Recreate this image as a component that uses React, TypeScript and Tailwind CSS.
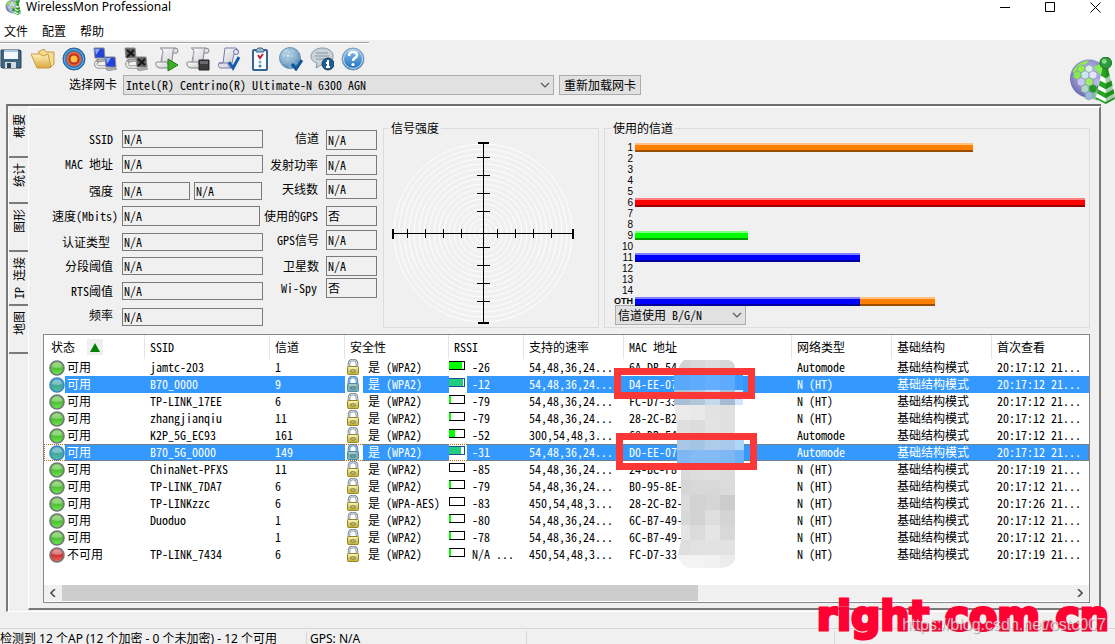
import type { ReactNode } from 'react';

const channels = [
  { name: '1', bars: [{ color: '#ff8000', value: 75 }] },
  { name: '2', bars: [] },
  { name: '3', bars: [] },
  { name: '4', bars: [] },
  { name: '5', bars: [] },
  { name: '6', bars: [{ color: '#ff0000', value: 100 }] },
  { name: '7', bars: [] },
  { name: '8', bars: [] },
  { name: '9', bars: [{ color: '#00ff00', value: 25 }] },
  { name: '10', bars: [] },
  { name: '11', bars: [{ color: '#0000ff', value: 50 }] },
  { name: '12', bars: [] },
  { name: '13', bars: [] },
  { name: '14', bars: [] },
  { name: 'OTH', bars: [{ color: '#0000ff', value: 50 }, { color: '#ff8000', value: 16.6 }] },
];

const networks = [
  { ssid: 'jamtc-203', channel: '1', security: '(WPA2)', rssi: '-26', level: 13, rates: '54,48,36,24...', mac: '6A-DB-54', type: 'Automode', seen: '20:17:12 21...' },
  { ssid: 'B70_0000', channel: '9', security: '(WPA2)', rssi: '-12', level: 14, rates: '54,48,36,24...', mac: 'D4-EE-07', type: 'N (HT)', seen: '20:17:12 21...', selected: true },
  { ssid: 'TP-LINK_17EE', channel: '6', security: '(WPA2)', rssi: '-79', level: 2, rates: '54,48,36,24...', mac: 'FC-D7-33', type: 'N (HT)', seen: '20:17:12 21...' },
  { ssid: 'zhangjianqiu', channel: '11', security: '(WPA2)', rssi: '-79', level: 2, rates: '54,48,36,24...', mac: '28-2C-B2', type: 'N (HT)', seen: '20:17:12 21...' },
  { ssid: 'K2P_5G_EC93', channel: '161', security: '(WPA2)', rssi: '-52', level: 6, rates: '300,54,48,3...', mac: '68-DB-54', type: 'Automode', seen: '20:17:12 21...' },
  { ssid: 'B70_5G_0000', channel: '149', security: '(WPA2)', rssi: '-31', level: 12, rates: '54,48,36,24...', mac: 'D0-EE-07', type: 'Automode', seen: '20:17:12 21...', selected: true, focused: true },
  { ssid: 'ChinaNet-PFXS', channel: '11', security: '(WPA2)', rssi: '-85', level: 0, rates: '54,48,36,24...', mac: '24-BC-F8', type: 'N (HT)', seen: '20:17:19 21...' },
  { ssid: 'TP-LINK_7DA7', channel: '6', security: '(WPA2)', rssi: '-79', level: 2, rates: '54,48,36,24...', mac: 'B0-95-8E-', type: 'N (HT)', seen: '20:17:12 21...' },
  { ssid: 'TP-LINKzzc', channel: '6', security: '(WPA-AES)', rssi: '-83', level: 0, rates: '450,54,48,3...', mac: '28-2C-B2-', type: 'N (HT)', seen: '20:17:26 21...' },
  { ssid: 'Duoduo', channel: '1', security: '(WPA2)', rssi: '-80', level: 2, rates: '54,48,36,24...', mac: '6C-B7-49-', type: 'N (HT)', seen: '20:17:12 21...' },
  { ssid: '', channel: '1', security: '(WPA2)', rssi: '-78', level: 2, rates: '54,48,36,24...', mac: '6C-B7-49-', type: 'N (HT)', seen: '20:17:12 21...' },
  { ssid: 'TP-LINK_7434', channel: '6', security: '(WPA2)', rssi: 'N/A ...', level: 2, rates: '450,54,48,3...', mac: 'FC-D7-33', type: 'N (HT)', seen: '20:17:19 21...', offline: true },
];

const mosaicRows = [
  ['#d3d3d3', '#d8d8d8', '#dddddd', '#d6d6d6'],
  ['#5aa8fa', '#5eabfb', '#64aeff', '#5eabfd'],
  ['#a9bfd6', '#b2c6dc', '#c4d8ee', '#a6bcd4'],
  ['#ebebeb', '#e9e9e9', '#e2e2e2', '#e0e0e0'],
  ['#dfdfdf', '#dcdcdc', '#e3e3e3', '#e0e0e0'],
  ['#a9c8e8', '#a4c4e5', '#aecbe9', '#a9c9ea'],
  ['#80b7f2', '#85bbf5', '#84baf4', '#7fb7f4'],
  ['#dadada', '#dddddd', '#dedede', '#dcdcdc'],
  ['#d6d6d6', '#d8d8d8', '#d8d8d8', '#dbdbdb'],
  ['#dbdbdb', '#d2d2d2', '#d5d5d5', '#cccccc'],
  ['#d8d8d8', '#d3d3d3', '#dedede', '#d4d4d4'],
  ['#e4e4e4', '#dbdbdb', '#e5e5e5', '#d8d8d8'],
  ['#dedede', '#e1e1e1', '#e2e2e2', '#e2e2e2'],
  ['#f3f3f3', '#f3f3f3', '#f1f1f1', '#ececec'],
];

function Gradients() {
  return (
    <svg className="absolute h-0 w-0" aria-hidden="true">
      <defs>
        <linearGradient id="paper" x1="0" y1="0" x2="1" y2="1">
          <stop offset="0" stopColor="#ffffff" />
          <stop offset="1" stopColor="#c4c4cc" />
        </linearGradient>
        <linearGradient id="folder" x1="0" y1="0" x2="0" y2="1">
          <stop offset="0" stopColor="#fff0b8" />
          <stop offset="1" stopColor="#d9a83c" />
        </linearGradient>
        <radialGradient id="sky" cx="0.4" cy="0.3" r="0.7">
          <stop offset="0" stopColor="#d9eefb" />
          <stop offset="1" stopColor="#4d86b4" />
        </radialGradient>
        <radialGradient id="lilac" cx="0.5" cy="0.4" r="0.6">
          <stop offset="0" stopColor="#d5d4fa" />
          <stop offset="1" stopColor="#6a69b0" />
        </radialGradient>
        <linearGradient id="okOrb" x1="0" y1="0" x2="0" y2="1">
          <stop offset="0" stopColor="#8fd070" />
          <stop offset="0.5" stopColor="#4cbf30" />
          <stop offset="1" stopColor="#6fe850" />
        </linearGradient>
        <linearGradient id="badOrb" x1="0" y1="0" x2="0" y2="1">
          <stop offset="0" stopColor="#e89090" />
          <stop offset="0.5" stopColor="#cc3030" />
          <stop offset="1" stopColor="#ee6a60" />
        </linearGradient>
        <linearGradient id="selOrb" x1="0" y1="0" x2="0" y2="1">
          <stop offset="0" stopColor="#5aaed0" />
          <stop offset="0.5" stopColor="#42a69c" />
          <stop offset="1" stopColor="#4fc0a0" />
        </linearGradient>
        <linearGradient id="brass" x1="0" y1="0" x2="0" y2="1">
          <stop offset="0" stopColor="#f4efa0" />
          <stop offset="1" stopColor="#c2b030" />
        </linearGradient>
        <linearGradient id="helpBlue" x1="0" y1="0" x2="0" y2="1">
          <stop offset="0" stopColor="#8cc4f0" />
          <stop offset="1" stopColor="#1b6fbd" />
        </linearGradient>
      </defs>
    </svg>
  );
}

function Scroll() {
  return (
    <>
      <path d="M5 1h15q3 0 3 3l-1 2h-4l-2 14H5L8 4z" fill="url(#paper)" stroke="#85858c" />
      <path d="M18 6q-1-3 2-5" fill="none" stroke="#85858c" />
      <path d="M5 1q3 0 3 4L7 15" fill="none" stroke="#b5b5bc" />
      <path d="M12 15H2q-2 0-1 3 1 3 4 3h12q-4-1-5-6z" fill="url(#paper)" stroke="#85858c" />
    </>
  );
}

function Computers({ screen, crossed }: { screen: string; crossed?: boolean }) {
  return (
    <>
      <path d="M6 13q-6 4-1 7h9" fill="none" stroke="#999999" strokeWidth="3.5" />
      <path d="M6 13q-6 4-1 7h9" fill="none" stroke="#f4f4f4" strokeWidth="1.5" />
      <path d="M1 1h10l1 10H2z" fill={screen} stroke="#888888" />
      <path d="M3 13l9-1 2 2-10 1z" fill="#b5b5b5" stroke="#666666" strokeWidth="0.5" />
      <path d="M12 10h10l1 10H13z" fill={screen} stroke="#888888" />
      <path d="M13 22l9-2 2 2-9 2z" fill="#b5b5b5" stroke="#666666" strokeWidth="0.5" />
      {crossed ? (
        <path d="M3 3l7 6M10 3l-7 7M14 12l7 6M21 12l-7 7" stroke="#151515" strokeWidth="1.8" />
      ) : (
        <path d="M2 2h5l-4 6zM13 11h5l-4 6z" fill="#86aaff" />
      )}
    </>
  );
}

const tools: { label: string; icon: ReactNode }[] = [
  {
    label: '保存',
    icon: (
      <>
        <path d="M1 3h19l1 1v17H2l-1-1z" fill="#3f6480" stroke="#28455c" />
        <path d="M4 3h14v9H4z" fill="#f2f8fc" />
        <path d="M4 3h14v2H4z" fill="#a9c8e0" />
        <path d="M5 15h11v6H5z" fill="#d4dbe0" />
        <path d="M7 16h4v5H7z" fill="#28455c" />
      </>
    ),
  },
  {
    label: '打开',
    icon: (
      <>
        <path d="M7 5l6-3 2 3h8v12l-4 4z" fill="#f5dc92" stroke="#c79a44" />
        <path d="M0 7h9l3 2 5-2 3 13-2 1H6z" fill="url(#folder)" stroke="#c79a44" />
      </>
    ),
  },
  {
    label: '目标',
    icon: (
      <>
        <circle cx="12" cy="12" r="11" fill="#2478bd" stroke="#2d628f" />
        <circle cx="12" cy="12" r="9.5" fill="none" stroke="#6db4ec" />
        <circle cx="12" cy="12" r="7.5" fill="#e8643c" />
        <circle cx="12" cy="12" r="5.5" fill="#b8322a" />
        <circle cx="12" cy="12" r="3.5" fill="#ffc23c" />
      </>
    ),
  },
  { label: '连接', icon: <Computers screen="#2442d8" /> },
  { label: '断开', icon: <Computers screen="#606060" crossed /> },
  {
    label: '开始记录',
    icon: (
      <>
        <Scroll />
        <path d="M13 12l10 6-10 6z" fill="#3fae2a" stroke="#1f7a14" />
      </>
    ),
  },
  {
    label: '停止记录',
    icon: (
      <>
        <Scroll />
        <path d="M13 13h10v10H13z" fill="#3c3c3c" stroke="#222222" />
        <path d="M14 14h8v3h-8z" fill="#6c6c6c" />
      </>
    ),
  },
  {
    label: '脚本',
    icon: (
      <>
        <path d="M8 1h11q4 2 2 6h-4l-3 14H3q-3-2-1-5h4z" fill="url(#paper)" stroke="#7a7aa8" />
        <path d="M2 16h9q0 4 3 5" fill="none" stroke="#7a7aa8" />
        <circle cx="19" cy="5" r="2.5" fill="#e5e5f5" stroke="#7a7aa8" />
        <path d="M12 15l4 6 6-11" fill="none" stroke="#155fb0" strokeWidth="3" />
      </>
    ),
  },
  {
    label: '清单',
    icon: (
      <>
        <rect x="5" y="3" width="14" height="20" rx="1" fill="#f8fbff" stroke="#35658f" strokeWidth="2" />
        <path d="M8 3l2-2h4l2 2v2H8z" fill="#9db4c8" stroke="#35658f" />
        <path d="M10 8l2 3 3-4" fill="none" stroke="#c0202c" strokeWidth="2" />
        <circle cx="12" cy="15" r="1.5" fill="#8aa9c2" />
        <circle cx="12" cy="19" r="1.5" fill="#4d86b4" />
      </>
    ),
  },
  {
    label: '网络检查',
    icon: (
      <>
        <circle cx="11" cy="11" r="10.5" fill="url(#sky)" stroke="#6f93ad" />
        <path d="M1 11h20M11 1v20M3 5q8 4 16 0M3 17q8-4 16 0M11 1q-9 10 0 20M11 1q9 10 0 20" fill="none" stroke="#8fb4cd" strokeWidth="0.8" />
        <path d="M13 17l4 5 6-9" fill="none" stroke="#12579c" strokeWidth="3" />
      </>
    ),
  },
  {
    label: '信息',
    icon: (
      <>
        <path d="M12 1c6 0 11 3 11 8s-4 8-10 8l-7 4 1-5c-4-1-6-3-6-7s5-8 11-8z" fill="#c9d3db" stroke="#8797a3" />
        <path d="M6 6h12M5 9h14M6 12h10" stroke="#8a97a0" />
        <circle cx="18" cy="17" r="6" fill="#245c8c" stroke="#173f62" />
        <path d="M18 13v2M16 16h2v4M16 20h4" fill="none" stroke="#ffffff" strokeWidth="2" />
      </>
    ),
  },
  {
    label: '帮助',
    icon: (
      <>
        <circle cx="12" cy="12" r="11" fill="url(#helpBlue)" stroke="#8b98a4" />
        <circle cx="12" cy="12" r="9.5" fill="none" stroke="#c3e0f6" />
        <path d="M8 9q0-4 4-4t4 3q0 2-2 3t-2 3" fill="none" stroke="#ffffff" strokeWidth="2.6" />
        <circle cx="12" cy="17.5" r="1.6" fill="#ffffff" />
      </>
    ),
  },
];

const hexes = [
  [12, 13, '#8fee50'], [20, 13, '#d8f0e0'], [8, 19, '#86e850'], [16, 19, '#c8e8f0'], [24, 19, '#e4e4ff'],
  [28, 26, '#b4b4e8'], [20, 26, '#9cf060'], [12, 26, '#c8c8f4'], [16, 33, '#b0d8c8'], [24, 33, '#1f9a1c'],
  [32, 33, '#178a16'], [28, 40, '#86c8a0'], [20, 40, '#98b8d8'],
] as const;

function Logo({ className }: { className: string }) {
  return (
    <svg viewBox="0 0 46 48" className={className} aria-hidden="true">
      <circle cx="20" cy="22" r="19.5" fill="url(#lilac)" />
      <path d="M3 15Q8 5 20 3l-3 4-8 3-3 7z" fill="#8cf04a" />
      {hexes.map(([x, y, fill]) => (
        <path key={`${x}-${y}`} d={`M${x} ${y - 5}l4 2v5l-4 2-4-2v-5z`} fill={fill} stroke="#8a92b0" strokeWidth="0.7" />
      ))}
      <path d="M25 10l9-4 2 8-5 4z" fill="#86f04c" />
      <path d="M34 10h5l8 31-10 7-10-7z" fill="#fafffa" />
      <path d="M34 10h5l2 9-4 3-5-3zM31 24l6 3 6-3 1 5-7 4-7-4zM29 33l8 4 8-4 1 4-9 5-9-5zM27 41l10 5 9-5v2l-9 5-10-5z" fill="#26a422" />
      <path d="M37 10h2l8 33-10 5z" fill="#0c6a14" fillOpacity="0.35" />
      <circle cx="37" cy="6" r="6" fill="#2f9a3a" stroke="#1a6e26" />
      <circle cx="35.5" cy="4.5" r="2.5" fill="#86d88c" />
    </svg>
  );
}

function StatusOrb({ fill, ring }: { fill: string; ring: string }) {
  return (
    <svg viewBox="0 0 16 16" className="h-4 w-4 shrink-0" aria-hidden="true">
      <circle cx="8" cy="8" r="7" fill={fill} stroke={ring} strokeWidth="1.6" />
      <path d="M3 7q0-4 5-4t5 4q-5 2-10 0z" fill="#ffffff" fillOpacity="0.3" />
    </svg>
  );
}

function Lock({ selected }: { selected?: boolean }) {
  return (
    <svg viewBox="0 0 16 17" className="h-[17px] w-4" aria-hidden="true">
      <path d="M4 9V5q0-4 4-4t4 4v3" fill="none" stroke={selected ? '#4a84b8' : '#7d8a92'} strokeWidth="2.6" />
      <path d="M4 9V5q0-4 4-4t4 4v3" fill="none" stroke={selected ? '#9cc8ec' : '#d5dde2'} strokeWidth="1" />
      <rect x="2.5" y="7.5" width="11" height="8" rx="1" fill={selected ? '#7fb0a8' : 'url(#brass)'} stroke={selected ? '#4c8cb0' : '#94852a'} />
      <ellipse cx="8" cy="12" rx="2.6" ry="1.3" fill="none" stroke={selected ? '#4078a0' : '#7d8060'} />
      <path d="M4 9h7" stroke="#ffffff" strokeOpacity="0.6" />
    </svg>
  );
}

function SignalBar({ level, selected }: { level: number; selected?: boolean }) {
  return (
    <svg viewBox="0 0 16 9" className="mb-1 h-[9px] w-4" shapeRendering="crispEdges" aria-hidden="true">
      <rect width="16" height="9" fill={selected ? '#1a4f8c' : '#000000'} />
      <rect x="0" y="1" width="15" height="7" fill="#ffffff" />
      <rect x="0" y="1" width={level} height="7" fill={selected ? '#1fcc80' : '#00ff00'} />
      {level === 0 && <rect width="1" height="9" fill="#000000" />}
    </svg>
  );
}

function Chevron() {
  return (
    <svg viewBox="0 0 10 6" className="pointer-events-none absolute top-[7px] right-1 h-[6px] w-[10px]" aria-hidden="true">
      <path d="M1 1l4 4 4-4" fill="none" stroke="#555555" strokeWidth="1.2" />
    </svg>
  );
}

function Radar() {
  const rings = Array.from({ length: 18 }, (_, i) => 89 - i * 5);
  const ticks = [15, 33, 51, 69, 105, 123, 141, 159];
  return (
    <svg viewBox="0 0 182 182" className="mt-[6px] ml-2 h-[182px] w-[182px]" role="img" aria-label="信号强度">
      {rings.map((r) => (
        <circle key={r} cx="91" cy="91" r={r} fill="none" stroke="#ffffff" />
      ))}
      <g stroke="#000000" shapeRendering="crispEdges">
        <path d="M91.5 0v182M0 91.5h182" />
        {ticks.map((t) => (
          <path key={t} d={`M85 ${t + 0.5}h13M${t + 0.5} 87v9`} />
        ))}
        <path d="M86 1h11M86 181h11M1 87v10M181 87v10" strokeWidth="2" />
      </g>
    </svg>
  );
}

function Field({ id, label, value, gap, labelClass, inputClass }: {
  id: string; label: string; value: string; gap: string; labelClass: string; inputClass: string;
}) {
  return (
    <div className={`flex items-center ${gap}`}>
      <label htmlFor={id} className={`shrink-0 text-right leading-4 whitespace-nowrap ${labelClass}`}>{label}</label>
      <input id={id} readOnly value={value} className={`border border-[#7a7a7a] bg-[#f0f0f0] px-[1px] pb-[2px] leading-4 outline-none ${inputClass}`} />
    </div>
  );
}

const wide = 'h-[18px] w-[141px]';
const narrow = 'h-5 w-[51px]';
const half = 'h-[18px] w-[68px] border border-[#7a7a7a] px-[1px] pb-[2px] outline-none';

function DetailsForm() {
  return (
    <div className="flex shrink-0 pt-[22px]">
      <div className="w-[234px]">
        <Field id="ssid" label="SSID" value="N/A" gap="" labelClass="w-[93px] pr-[9px]" inputClass={wide} />
        <Field id="mac" label="MAC 地址" value="N/A" gap="mt-[7px]" labelClass="w-[93px] pr-[9px]" inputClass={wide} />
        <div className="mt-[9px] flex items-center">
          <label htmlFor="strength" className="w-[93px] pr-[9px] text-right leading-4">强度</label>
          <input id="strength" readOnly value="N/A" className={half} />
          <input aria-label="强度 2" readOnly value="N/A" className={`ml-1 ${half}`} />
        </div>
        <Field id="speed" label="速度(Mbits)" value="N/A" gap="mt-[6px]" labelClass="w-[93px] pr-1" inputClass="h-5 w-[138px]" />
        <Field id="auth" label="认证类型" value="N/A" gap="mt-[7px]" labelClass="w-[93px] pr-3" inputClass={wide} />
        <Field id="frag" label="分段阈值" value="N/A" gap="mt-[6px]" labelClass="w-[93px] pr-[9px]" inputClass={wide} />
        <Field id="rts" label="RTS阈值" value="N/A" gap="mt-[7px]" labelClass="w-[93px] pr-[9px]" inputClass={wide} />
        <Field id="freq" label="频率" value="N/A" gap="mt-[7px]" labelClass="w-[93px] pr-[9px] pb-1" inputClass={wide} />
      </div>
      <div className="w-[114px]">
        <Field id="channel" label="信道" value="N/A" gap="" labelClass="w-[63px] pr-[7px] pb-1" inputClass={narrow} />
        <Field id="power" label="发射功率" value="N/A" gap="mt-[5px]" labelClass="w-[63px] pr-2" inputClass={narrow} />
        <Field id="antennas" label="天线数" value="N/A" gap="mt-1" labelClass="w-[63px] pr-2" inputClass={narrow} />
        <Field id="usegps" label="使用的GPS" value="否" gap="mt-[7px]" labelClass="w-[63px] pr-2" inputClass={narrow} />
        <Field id="gpssignal" label="GPS信号" value="N/A" gap="mt-1" labelClass="w-[63px] pr-[7px]" inputClass={narrow} />
        <Field id="satellites" label="卫星数" value="N/A" gap="mt-[6px]" labelClass="w-[63px] pr-[7px]" inputClass={narrow} />
        <Field id="wispy" label="Wi-Spy" value="否" gap="mt-[2px]" labelClass="w-[63px] pr-[9px]" inputClass={narrow} />
      </div>
    </div>
  );
}

function ChannelChart() {
  return (
    <fieldset className="mt-3 mr-[9px] ml-[5px] h-[208px] min-w-0 flex-1 border border-[#dcdcdc]">
      <legend className="ml-[6px] px-[2px] leading-4">使用的信道</legend>
      <ul className="relative z-10 mt-[6px] mr-1">
        {channels.map((c) => (
          <li key={c.name} className="flex h-[11px] items-center">
            <span className={`mr-[2px] flex w-7 shrink-0 justify-end font-['Liberation_Sans',Arial,sans-serif] leading-[11px] ${c.name === 'OTH' ? 'text-[9px] font-bold' : 'text-[10px]'}`}>
              {c.name}
            </span>
            <span className="flex flex-1">
              {c.bars.map((b) => (
                <span
                  key={b.color}
                  className="h-[9px] shadow-[inset_0_2px_0_rgba(255,255,255,0.5),inset_0_-2px_0_rgba(0,0,0,0.4)]"
                  style={{ width: `${b.value}%`, backgroundColor: b.color }}
                />
              ))}
            </span>
          </li>
        ))}
      </ul>
      <div className="relative -mt-[2px] ml-[10px] w-[131px]">
        <select aria-label="信道使用" className="block h-5 w-full appearance-none border border-[#adadad] bg-[#e1e1e1] pl-[2px] leading-4">
          <option>信道使用 B/G/N</option>
        </select>
        <Chevron />
      </div>
    </fieldset>
  );
}

const columns = [
  { name: '状态', width: 'w-[101px]' },
  { name: 'SSID', width: 'w-[125px]' },
  { name: '信道', width: 'w-[75px]' },
  { name: '安全性', width: 'w-[104px]' },
  { name: 'RSSI', width: 'w-[75px]' },
  { name: '支持的速率', width: 'w-[100px]' },
  { name: 'MAC 地址', width: 'w-[168px]' },
  { name: '网络类型', width: 'w-[100px]' },
  { name: '基础结构', width: 'w-[100px]' },
  { name: '首次查看', width: '' },
];

function NetworkTable() {
  return (
    <table className="w-full table-fixed border-collapse">
      <thead>
        <tr className="h-6">
          {columns.map((col, i) => (
            <th key={col.name} className={`p-0 text-left font-normal ${col.width}`}>
              <div className={`flex h-6 items-center whitespace-nowrap ${i === 0 ? 'pl-[7px]' : 'pl-[5px]'} ${i < columns.length - 1 ? 'border-r border-[#e5e5e5]' : ''}`}>
                {col.name}
                {i === 0 && (
                  <span className="ml-3 flex h-4 w-4 items-center justify-center bg-[#f0f0f0]">
                    <svg viewBox="0 0 10 9" className="h-[9px] w-[10px]" aria-hidden="true">
                      <path d="M5 0l5 9H0z" fill="#008000" />
                    </svg>
                  </span>
                )}
              </div>
            </th>
          ))}
        </tr>
      </thead>
      <tbody>
        {networks.map((n, i) => {
          const fill = n.selected ? 'bg-[#3399ff] text-white' : '';
          const cell = `overflow-hidden p-0 pl-[5px] align-top whitespace-nowrap ${fill}`;
          return (
            <tr key={i} className={`h-[17px] leading-[15px] ${n.focused ? 'outline-1 -outline-offset-1 outline-[#b5651d] outline-dotted' : ''}`}>
              <td className="p-0 align-top">
                <div className="flex h-[17px] items-center pl-[5px]">
                  <StatusOrb
                    fill={n.selected ? 'url(#selOrb)' : n.offline ? 'url(#badOrb)' : 'url(#okOrb)'}
                    ring={n.selected ? '#3f86c0' : '#70777a'}
                  />
                  <span className={`h-[17px] flex-1 pl-[2px] ${fill}`}>{n.offline ? '不可用' : '可用'}</span>
                </div>
              </td>
              <td className={cell}>{n.ssid}</td>
              <td className={cell}>{n.channel}</td>
              <td className="p-0 align-top">
                <div className="flex h-[17px]">
                  <span className="w-[18px]"><Lock selected={n.selected} /></span>
                  <span className={`flex-1 pl-[5px] whitespace-pre ${fill}`}>{`是 ${n.security}`}</span>
                </div>
              </td>
              <td className="p-0 align-top">
                <div className="flex h-[17px]">
                  <span className="flex w-[18px] items-center"><SignalBar level={n.level} selected={n.selected} /></span>
                  <span className={`flex-1 pl-[5px] whitespace-nowrap ${fill}`}>{n.rssi}</span>
                </div>
              </td>
              <td className={cell}>{n.rates}</td>
              <td className={cell}>{n.mac}</td>
              <td className={cell}>{n.type}</td>
              <td className={cell}>基础结构模式</td>
              <td className={cell}>{n.seen}</td>
            </tr>
          );
        })}
      </tbody>
    </table>
  );
}

function Redaction() {
  return (
    <svg viewBox="0 0 70 210" className="absolute top-[25px] left-[630px] h-[210px] w-[70px]" aria-hidden="true">
      <clipPath id="smear">
        <path d="M10 0h45q6 2 6 8v7h9v30h-9v35h9v23h-9v97q-4 8-16 8H15q-9-3-11-12l3-15V105H3V66L0 45V15h3q1-10 7-15z" />
      </clipPath>
      <g clipPath="url(#smear)" shapeRendering="crispEdges">
        {mosaicRows.map((row, r) =>
          row.map((color, c) => (
            <rect key={`${r}-${c}`} x={c === 0 ? 0 : c * 15 + 1} y={r * 15} width={c === 0 ? 16 : 15} height="15" fill={color} />
          )),
        )}
        <rect x="61" y="15" width="8" height="15" fill="#3f9cff" />
        <rect x="61" y="30" width="8" height="15" fill="#cfe6ff" />
        <rect x="61" y="80" width="9" height="10" fill="#aed6fb" />
        <rect x="61" y="90" width="9" height="13" fill="#6cb2f8" />
      </g>
    </svg>
  );
}

const tabs = [
  { name: '概要', height: 'h-[50px]' },
  { name: '统计', height: 'h-[46px]' },
  { name: '图形', height: 'h-12' },
  { name: 'IP 连接', height: 'h-[54px]' },
  { name: '地图', height: 'h-12' },
];

export default function App() {
  return (
    <div className="relative flex h-screen flex-col overflow-hidden bg-[#f0f0f0] font-['Noto_Sans_Mono_CJK_SC','Noto_Sans_CJK_SC',monospace] text-xs text-black">
      <Gradients />

      <header className="h-10 shrink-0 bg-white font-['Noto_Sans','Noto_Sans_CJK_SC',sans-serif]">
        <div className="flex h-[14px] items-center">
          <Logo className="ml-1 h-4 w-[18px]" />
          <h1 className="ml-1 flex-1 text-xs leading-[14px]">WirelessMon Professional</h1>
          <div className="flex gap-[5px]">
            <button type="button" aria-label="最小化" className="flex h-3 w-10 items-center justify-center">
              <svg viewBox="0 0 11 11" className="h-[11px] w-[11px]"><path d="M0 5.5h10" stroke="#000000" /></svg>
            </button>
            <button type="button" aria-label="最大化" className="flex h-3 w-10 items-center justify-center">
              <svg viewBox="0 0 11 11" className="h-[11px] w-[11px]"><path d="M0.5 0.5h9v9h-9z" fill="none" stroke="#000000" /></svg>
            </button>
            <button type="button" aria-label="关闭" className="flex h-3 w-10 items-center justify-center">
              <svg viewBox="0 0 11 11" className="h-[11px] w-[11px]"><path d="M0.5 0.5l10 10M10.5 0.5l-10 10" stroke="#000000" /></svg>
            </button>
          </div>
        </div>
        <nav className="flex gap-[14px] pt-[9px] pl-1">
          <button type="button" className="leading-[17px]">文件</button>
          <button type="button" className="leading-[17px]">配置</button>
          <button type="button" className="leading-[17px]">帮助</button>
        </nav>
      </header>

      <div className="flex shrink-0 justify-between">
        <div className="pt-[2px] pb-[9px]">
          <div className="h-[2px] w-[369px] border-t border-b border-t-[#a0a0a0] border-b-white" />
          <div className="mt-[3px] flex gap-[7px]">
            {tools.map((tool) => (
              <button key={tool.label} type="button" aria-label={tool.label} className="h-6 w-6">
                <svg viewBox="0 0 24 24" className="h-6 w-6" aria-hidden="true">{tool.icon}</svg>
              </button>
            ))}
          </div>
          <div className="mt-1 flex items-center pl-[69px]">
            <label htmlFor="adapter" className="w-[54px] pb-[2px] leading-4">选择网卡</label>
            <div className="relative w-[431px]">
              <select id="adapter" className="block h-5 w-full appearance-none border border-[#adadad] bg-[#e1e1e1] pl-[2px] leading-4">
                <option>Intel(R) Centrino(R) Ultimate-N 6300 AGN</option>
              </select>
              <Chevron />
            </div>
            <button type="button" className="ml-[5px] h-5 w-[82px] border border-[#adadad] bg-[#e1e1e1] leading-4">重新加载网卡</button>
          </div>
        </div>
        <Logo className="mt-[17px] h-[47px] w-[46px]" />
      </div>

      <main className="mr-[14px] mb-4 ml-[6px] flex min-h-0 flex-1 border-t-2 border-b border-l-2 border-t-[#6e6e6e] border-b-white border-l-[#7a7a7a]">
        <div role="tablist" className="mt-[2px] flex w-5 shrink-0 flex-col border-l border-white">
          {tabs.map((tab, i) => (
            <button
              key={tab.name}
              type="button"
              role="tab"
              aria-selected={i === 0}
              className={`flex w-full items-start justify-center border-b-2 border-b-[#7a7a7a] ${i === 0 ? 'pt-[6px]' : 'pt-[5px]'} ${tab.height}`}
            >
              <span className="rotate-180 leading-4 whitespace-nowrap [text-orientation:sideways] [writing-mode:vertical-rl]">{tab.name}</span>
            </button>
          ))}
        </div>

        <section className="mb-[1px] flex min-w-0 flex-1 flex-col border-t-2 border-r-2 border-b-2 border-l border-t-white border-r-[#7a7a7a] border-b-[#7a7a7a] border-l-white">
          <div className="flex">
            <DetailsForm />
            <fieldset className="mt-3 ml-[6px] h-[208px] w-[216px] shrink-0 border border-[#dcdcdc]">
              <legend className="ml-[5px] px-[2px] leading-4">信号强度</legend>
              <Radar />
            </fieldset>
            <ChannelChart />
          </div>

          <div className="relative mt-[6px] mr-[9px] mb-[5px] ml-[14px] flex flex-1 flex-col justify-between border border-[#828790] bg-white">
            <NetworkTable />
            <div className="mb-[1px] flex h-4 items-center bg-[#f0f0f0]">
              <button type="button" aria-label="向左滚动" className="flex h-4 w-[18px] items-center justify-center">
                <svg viewBox="0 0 6 8" className="h-2 w-[6px]"><path d="M5 0L1 4l4 4" fill="none" stroke="#505050" strokeWidth="1.6" /></svg>
              </button>
              <div className="h-4 flex-1">
                <div className="h-4 w-[63%] bg-[#cdcdcd]" />
              </div>
              <button type="button" aria-label="向右滚动" className="flex h-4 w-[18px] items-center justify-center">
                <svg viewBox="0 0 6 8" className="h-2 w-[6px]"><path d="M1 0l4 4-4 4" fill="none" stroke="#505050" strokeWidth="1.6" /></svg>
              </button>
            </div>
            <Redaction />
            <div className="absolute top-[33px] left-[570px] h-[31px] w-[141px] border-7 border-[#fc3737]" />
            <div className="absolute top-[98px] left-[572px] h-[37px] w-[141px] border-7 border-[#fc3737]" />
          </div>
        </section>
      </main>

      <footer className="flex h-4 shrink-0 border-t border-[#d7d7d7] font-['Noto_Sans','Noto_Sans_CJK_SC',sans-serif] leading-5">
        <span className="w-[306px] shrink-0 whitespace-nowrap">检测到 12 个AP (12 个加密 - 0 个未加密) - 12 个可用</span>
        <span className="mt-[2px] w-[220px] border-l border-[#d7d7d7] pl-[3px] leading-4">GPS: N/A</span>
        <span className="mt-[2px] w-[308px] border-l border-[#d7d7d7]" />
        <span className="mt-[2px] flex-1 border-l border-[#d7d7d7]" />
      </footer>

      <div className="absolute right-[6px] bottom-1 font-['DejaVu_Sans',sans-serif] text-[41px] leading-[48px] font-bold text-[#ff0033] [-webkit-text-stroke:3px_#ff0033]">
        right.com.cn
      </div>
      <div className="absolute right-[9px] bottom-[9px] font-['Liberation_Sans',Arial,sans-serif] text-base leading-5 text-white/70 [text-shadow:1px_1px_1px_rgba(90,90,90,0.5)]">
        https://blog.csdn.net/ostc007
      </div>
    </div>
  );
}
